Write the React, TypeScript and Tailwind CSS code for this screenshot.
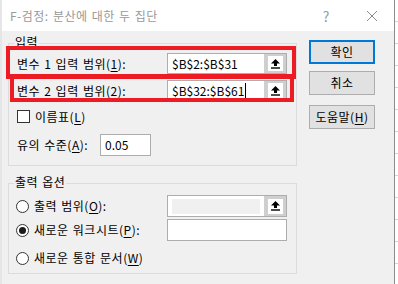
import React from "react";

const FONT = "font-['Noto_Sans_CJK_KR','Noto_Sans',sans-serif] tracking-[0.5px] [word-spacing:1px]";

function UpArrow() {
  return (
    <svg width="9" height="10" viewBox="0 0 9 10">
      <path d="M4.5 0 L9 4.5 H6 V7 H3 V4.5 H0 Z" fill="#000" />
      <rect x="0" y="8.3" width="9" height="1.4" fill="#000" />
    </svg>
  );
}

function Key({ k }: { k: string }) {
  return <span className="underline underline-offset-2 decoration-1">{k}</span>;
}

function RangeBox({ value, cursor, disabled }: { value?: string; cursor?: boolean; disabled?: boolean }) {
  return (
    <div className="flex h-full w-[120px] border border-[#adadad] bg-white">
      <div className="flex flex-1 items-center pl-[4px] pr-[4px] text-[12px] leading-[14px] tracking-normal text-black">
        {disabled ? (
          <div className="h-[15px] w-full bg-[#f0f0f0]" />
        ) : (
          <>
            <span>{value}</span>
            {cursor && <span className="ml-[1px] h-[15px] w-px bg-black" />}
          </>
        )}
      </div>
      <div className="flex w-[22px] items-center justify-center bg-[#cfcfcf]">
        <div className="flex h-[15px] w-[15px] items-center justify-center bg-white">
          <UpArrow />
        </div>
      </div>
    </div>
  );
}

function Radio({ checked }: { checked?: boolean }) {
  return (
    <span className="flex h-[13px] w-[13px] items-center justify-center rounded-full border border-[#333333] bg-white">
      {checked && <span className="h-[7px] w-[7px] rounded-full bg-[#1a1a1a]" />}
    </span>
  );
}

function DlgButton({ children, primary }: { children: React.ReactNode; primary?: boolean }) {
  return (
    <button
      className={
        primary
          ? "flex h-[24px] w-[66px] items-center justify-center border-2 border-[#0078d7] bg-[#e1e1e1] text-[12px] leading-[14px] text-black"
          : "flex h-[24px] w-[66px] items-center justify-center border border-[#adadad] bg-[#e1e1e1] text-[12px] leading-[14px] text-black"
      }
    >
      {children}
    </button>
  );
}

export default function App() {
  return (
    <div className={`relative flex h-[284px] w-[398px] overflow-hidden bg-white ${FONT}`}>
      {/* excel grid strip left */}
      <div className="h-full w-[2px] bg-[#e6e6e6]" />

      {/* Dialog */}
      <div className="flex h-full w-[393px] flex-col border-r border-[#8c8c8c] bg-[#f0f0f0]">
        {/* Title bar */}
        <div className="flex h-[31px] items-center bg-white pl-[8px]">
          <span className="text-[12px] leading-[14px] text-[#999999]">F-검정: 분산에 대한 두 집단</span>
          <span className="ml-auto mr-[36px] text-[14px] leading-[14px] text-[#999999]">?</span>
          <svg width="12" height="12" viewBox="0 0 12 12" className="mr-[16px]">
            <path d="M1 1 L11 11 M11 1 L1 11" stroke="#8a8a8a" strokeWidth="1" />
          </svg>
        </div>

        {/* Body */}
        <div className="flex flex-1 items-start pl-[6px]">
          {/* Left column */}
          <div className="flex w-[289px] flex-col pt-[12px]">
            {/* 입력 group */}
            <div className="relative flex h-[123px] flex-col border border-[#dcdcdc] pl-[8px] pt-[9px]">
              <span className="absolute left-[5px] top-[-9px] bg-[#f0f0f0] px-[1px] text-[12px] leading-[14px] text-black">
                입력
              </span>
              <div className="flex h-[21px] items-center">
                <span className="w-[150px] text-[12px] leading-[14px] text-black">
                  변수 1 입력 범위(<Key k="1" />):
                </span>
                <RangeBox value="$B$2:$B$31" />
              </div>
              <div className="mt-[6px] flex h-[21px] items-center">
                <span className="w-[150px] text-[12px] leading-[14px] text-black">
                  변수 2 입력 범위(<Key k="2" />):
                </span>
                <RangeBox value="$B$32:$B$61" cursor />
              </div>
              <div className="mt-[9px] flex h-[13px] items-center gap-[5px]">
                <span className="h-[13px] w-[13px] border border-[#333333] bg-white" />
                <span className="text-[12px] leading-[14px] text-black">
                  이름표(<Key k="L" />)
                </span>
              </div>
              <div className="mt-[11px] flex h-[22px] items-center">
                <span className="w-[83px] text-[12px] leading-[14px] text-black">
                  유의 수준(<Key k="A" />):
                </span>
                <div className="flex h-full w-[51px] items-center border border-[#adadad] bg-white pl-[4px] text-[12px] leading-[14px] tracking-normal text-black">
                  0.05
                </div>
              </div>
            </div>

            {/* 출력 옵션 group */}
            <div className="relative mt-[17px] flex h-[91px] flex-col border border-[#dcdcdc] pl-[7px] pt-[11px]">
              <span className="absolute left-[5px] top-[-9px] bg-[#f0f0f0] px-[1px] text-[12px] leading-[14px] text-black">
                출력 옵션
              </span>
              <div className="flex h-[22px] items-center">
                <div className="flex w-[151px] items-center gap-[5px]">
                  <Radio />
                  <span className="text-[12px] leading-[14px] text-black">
                    출력 범위(<Key k="O" />):
                  </span>
                </div>
                <RangeBox disabled />
              </div>
              <div className="mt-[2px] flex h-[22px] items-center">
                <div className="flex w-[151px] items-center gap-[5px]">
                  <Radio checked />
                  <span className="text-[12px] leading-[14px] text-black">
                    새로운 워크시트(<Key k="P" />):
                  </span>
                </div>
                <div className="h-full w-[120px] border border-[#adadad] bg-white" />
              </div>
              <div className="mt-[9px] flex h-[16px] items-center gap-[5px]">
                <Radio />
                <span className="text-[12px] leading-[14px] text-black">
                  새로운 통합 문서(<Key k="W" />)
                </span>
              </div>
            </div>
          </div>

          {/* Right column buttons */}
          <div className="ml-[12px] flex flex-col pt-[9px]">
            <DlgButton primary>확인</DlgButton>
            <div className="mt-[7px]">
              <DlgButton>취소</DlgButton>
            </div>
            <div className="mt-[10px]">
              <DlgButton>
                도움말(<Key k="H" />)
              </DlgButton>
            </div>
          </div>
        </div>
      </div>

      {/* excel grid strip right */}
      <div className="h-full flex-1 bg-[repeating-linear-gradient(to_bottom,#ffffff_0px,#ffffff_21px,#d4d4d4_21px,#d4d4d4_22px)]" />

      {/* red annotation boxes */}
      <div className="pointer-events-none absolute left-[6px] top-[46px] h-[33px] w-[290px] border-4 border-[#ed1c24]" />
      <div className="pointer-events-none absolute left-[10px] top-[74px] h-[28px] w-[284px] border-4 border-[#ed1c24]" />
    </div>
  );
}
